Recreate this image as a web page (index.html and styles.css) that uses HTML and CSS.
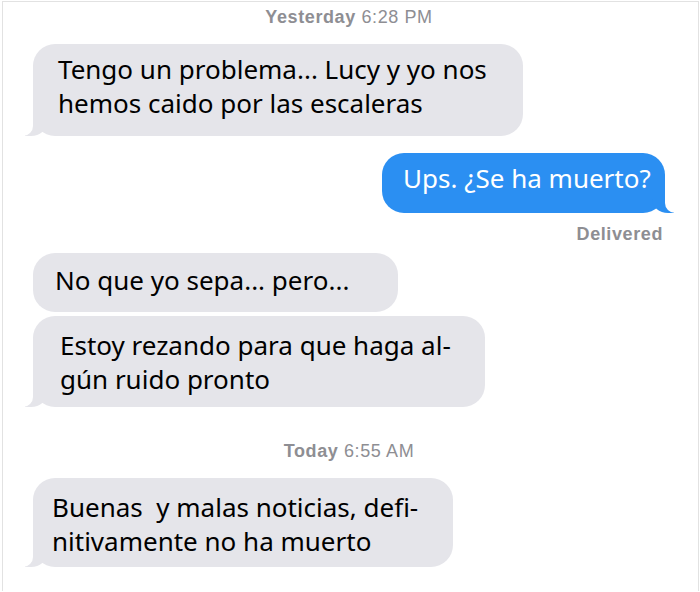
FILE: index.html
```html
<!DOCTYPE html>
<html lang="es">
<head>
    <meta charset="UTF-8">
    <meta name="viewport" content="width=device-width, initial-scale=1.0">
    <title>Mensajes</title>
    <link rel="stylesheet" href="styles.css">
</head>
<body>
<div class="chat">
    <p class="stamp"><strong>Yesterday</strong> 6:28 PM</p>

    <div class="msg in tail problem">Tengo un problema... Lucy y yo nos<br>hemos caido por las escaleras</div>

    <div class="msg out tail reply">Ups. ¿Se ha muerto?</div>
    <p class="status">Delivered</p>

    <div class="msg in unknown">No que yo sepa... pero...</div>
    <div class="msg in tail praying">Estoy rezando para que haga al-<br>gún ruido pronto</div>

    <p class="stamp today"><strong>Today</strong> 6:55 AM</p>

    <div class="msg in tail news">Buenas&nbsp; y malas noticias, defi-<br>nitivamente no ha muerto</div>
</div>
</body>
</html>
```

FILE: styles.css
```css
body {
    margin: 0;
    background-color: #fff;
}
.chat {
    height: 589px;
    margin: 1px 1px 0 2px;
    border: 1px solid #e2e2e2;
    border-bottom: none;
    display: flex;
    flex-direction: column;
    align-items: flex-start;
    padding: 0 33px 0 30px;
    font-family: "Noto Sans", sans-serif;
    font-variant-ligatures: none;
}
.stamp {
    align-self: center;
    margin: 4px 0 0;
    font-family: "Liberation Sans", Arial, sans-serif;
    font-size: 18px;
    line-height: 22px;
    letter-spacing: 0.6px;
    color: #8e8e93;
}
.stamp strong {
    font-weight: bold;
}
.stamp.today {
    margin-top: 33px;
}
.msg {
    position: relative;
    box-sizing: border-box;
    margin-top: 16px;
    border-radius: 22px;
    background-color: #e5e5ea;
    color: #000;
    font-size: 26px;
    line-height: 34px;
    white-space: nowrap;
}
.msg.out {
    align-self: flex-end;
    background-color: #2b8ff2;
    color: #fff;
}
.status {
    align-self: flex-end;
    margin: 10px 2px 0 0;
    font-family: "Liberation Sans", Arial, sans-serif;
    font-weight: bold;
    font-size: 18px;
    line-height: 22px;
    letter-spacing: 0.6px;
    color: #8e8e93;
}

/* each bubble */
.problem {
    width: 490px;
    padding: 8px 0 16px 25px;
}
.reply {
    width: 283px;
    margin-top: 17px;
    padding: 8px 0 18px 21px;
}
.unknown {
    width: 365px;
    margin-top: 8px;
    padding: 10px 0 15px 22px;
}
.praying {
    width: 452px;
    margin-top: 4px;
    padding: 12px 0 11px 27px;
}
.news {
    width: 420px;
    padding: 12px 0 9px 19px;
}

/* bubble tails */
.msg.tail::before,
.msg.tail::after {
    content: "";
    position: absolute;
    bottom: 0;
    height: 22px;
}
.msg.in.tail::before {
    left: -8px;
    width: 22px;
    background-color: #e5e5ea;
    border-bottom-right-radius: 16px 14px;
}
.msg.in.tail::after {
    left: -12px;
    width: 12px;
    background-color: #fff;
    border-bottom-right-radius: 10px;
}
.msg.out.tail::before {
    right: -9px;
    width: 22px;
    background-color: #2b8ff2;
    border-bottom-left-radius: 16px 14px;
}
.msg.out.tail::after {
    right: -12px;
    width: 12px;
    background-color: #fff;
    border-bottom-left-radius: 10px;
}
```
